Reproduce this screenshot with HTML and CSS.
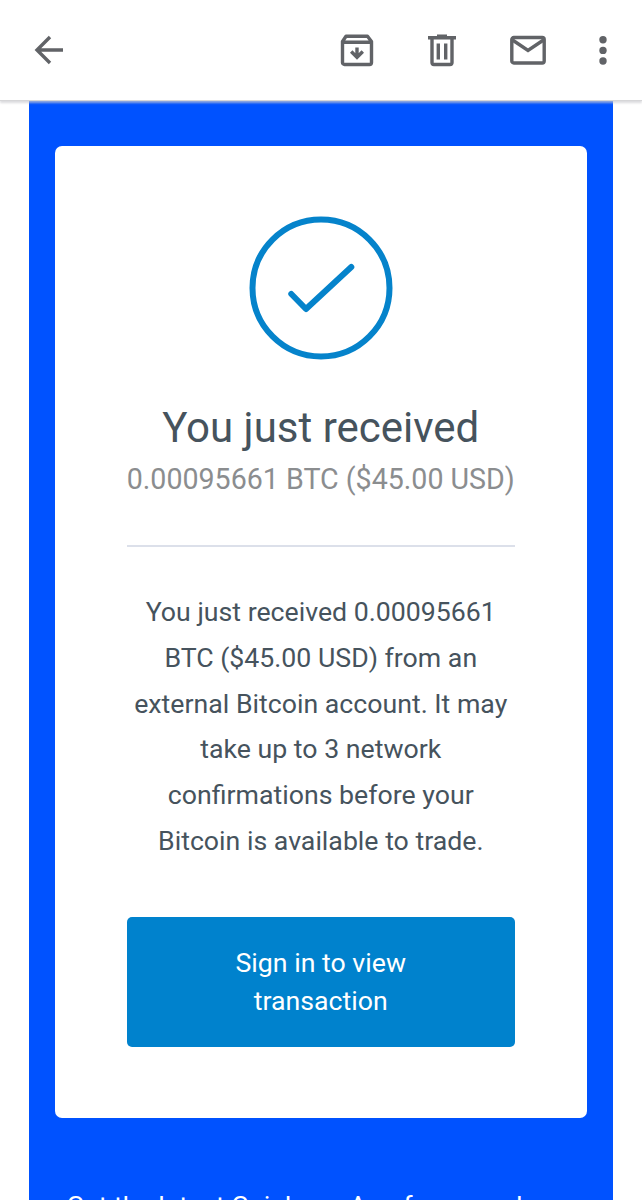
FILE: index.html
```html
<!DOCTYPE html>
<html lang="en">
<head>
    <meta charset="utf-8">
    <title>You just received BTC</title>
    <link rel="stylesheet" href="styles.css">
</head>
<body>
    <header class="toolbar">
        <svg class="back" viewBox="0 0 30 30" width="30" height="30">
            <path d="M29 15H3M16 2L3 15l13 13"/>
        </svg>
        <div class="actions">
            <!-- archive -->
            <svg viewBox="0 0 34 34" width="34" height="34">
                <path stroke-linejoin="round" d="M2.500 8.500L6 3.300h21.500l4 5.200V29.500a2 2 0 0 1-2 2h-25a2 2 0 0 1-2-2zM2.500 9.300h29"/>
                <path d="M17 14.500v9M11.200 18.500L17 24.300l5.800-5.800"/>
            </svg>
            <!-- delete -->
            <svg viewBox="0 0 30 34" width="30" height="34">
                <path d="M1 4.800h28M10 3.200h10M5 4.800V29.500a2 2 0 0 0 2 2h16a2 2 0 0 0 2-2V4.800M11.300 10.500v16M18.700 10.500v16"/>
            </svg>
            <!-- mark unread -->
            <svg viewBox="0 0 36 30" width="36" height="30">
                <rect x="1.800" y="2.500" width="32.400" height="25.500" rx="2"/>
                <path d="M2.500 5L18 15.500 33.500 5"/>
            </svg>
            <svg class="more" viewBox="0 0 8 30" width="8" height="30">
                <circle cx="4" cy="4.700" r="3.700"/>
                <circle cx="4" cy="15.400" r="3.700"/>
                <circle cx="4" cy="26" r="3.700"/>
            </svg>
        </div>
    </header>

    <main class="email">
        <section class="card">
            <svg class="check" viewBox="0 0 144 144" width="144" height="144">
                <circle cx="72" cy="72" r="68.500"/>
                <path d="M42.300 78L57 93l45.300-42"/>
            </svg>
            <h1>You just received</h1>
            <p class="amount">0.00095661 BTC ($45.00 USD)</p>
            <hr>
            <p class="message">You just received 0.00095661<br>BTC ($45.00 USD) from an<br>external Bitcoin account. It may<br>take up to 3 network<br>confirmations before your<br>Bitcoin is available to trade.</p>
            <a class="button" href="#">Sign in to view<br>transaction</a>
        </section>
        <p class="footer">Get the latest Coinbase App for your phone</p>
    </main>
</body>
</html>
```
FILE: styles.css
```css
* {
    box-sizing: border-box;
}

body, h1, p {
    margin: 0;
}

body {
    height: 1200px;
    overflow: hidden;
    background-color: #fff;
    font-family: Roboto, sans-serif;
    color: #46535d;
    text-align: center;
}

/* Top bar */
.toolbar {
    position: relative;
    z-index: 1;
    height: 100px;
    padding: 0 35px 0 34px;
    display: flex;
    align-items: center;
    justify-content: space-between;
    background-color: #fff;
    box-shadow: 0 1px 0 #d6d6d8, 0 3px 2px rgba(205, 205, 210, 0.7);
}

.toolbar svg {
    fill: none;
    stroke: #616367;
    stroke-width: 3.4;
}

.toolbar .more {
    fill: #616367;
    stroke: none;
}

.actions {
    display: flex;
    align-items: center;
    gap: 53px;
}

/* Blue email background */
.email {
    width: 584.5px;
    height: 1100px;
    margin-left: 28.5px;
    padding: 46px 26.5px 0;
    background-color: #0052ff;
}

.card {
    height: 972px;
    padding: 70px 71.5px 0;
    border-radius: 7px;
    background-color: #fff;
}

.check {
    display: block;
    margin: 0 auto;
    fill: none;
    stroke: #0583cb;
    stroke-width: 6;
    stroke-linecap: round;
    stroke-linejoin: round;
}

h1 {
    margin-top: 43px;
    font-size: 42px;
    font-weight: 400;
    line-height: 50px;
    white-space: nowrap;
}

.amount {
    margin: 8px -10px 0;
    font-size: 28.6px;
    line-height: 36px;
    color: #8b8d8f;
    white-space: nowrap;
}

hr {
    height: 2px;
    margin: 48px 0 43px;
    border: 0;
    background-color: #dce0ea;
}

.message {
    font-size: 26.7px;
    line-height: 45.8px;
    white-space: nowrap;
}

.button {
    display: block;
    height: 130px;
    margin-top: 52px;
    padding-top: 27px;
    border-radius: 5px;
    background-color: #0082cd;
    color: #fff;
    font-size: 26.7px;
    line-height: 38px;
    text-decoration: none;
}

.footer {
    margin-top: 69px;
    font-size: 26.7px;
    line-height: 38px;
    color: #fff;
    white-space: nowrap;
}
```
